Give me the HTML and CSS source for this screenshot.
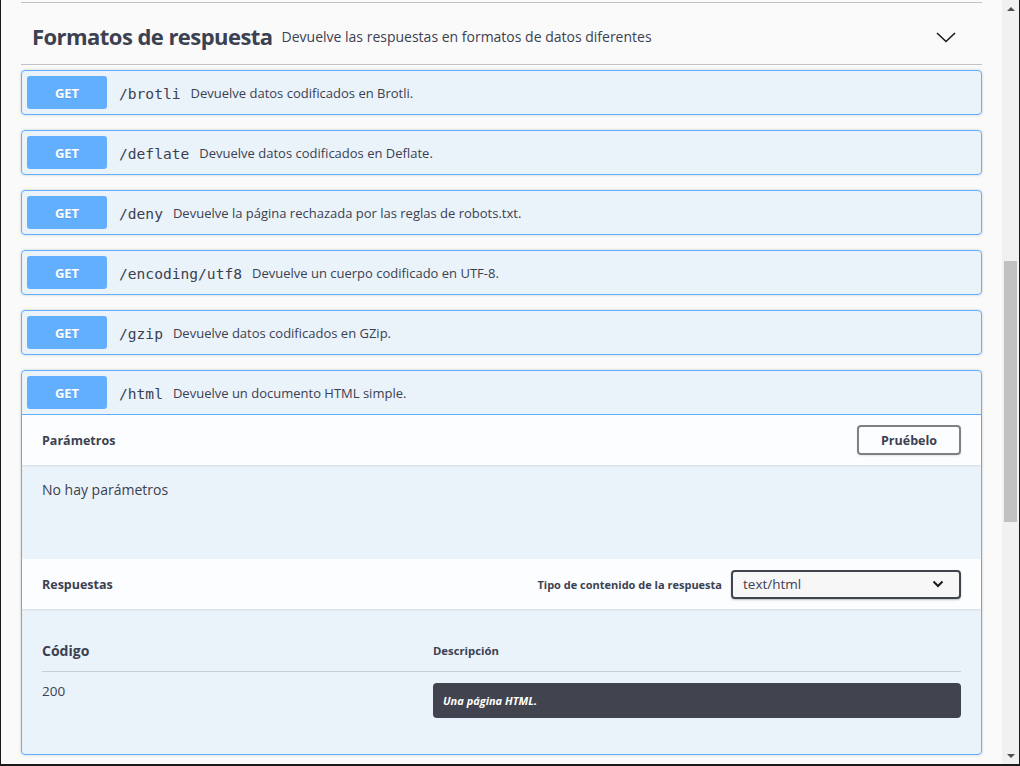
FILE: index.html
```html
<!DOCTYPE html>
<html lang="es">
<head>
<meta charset="utf-8">
<title>Formatos de respuesta</title>
<link rel="stylesheet" href="styles.css">
</head>
<body>
<div class="window">
  <div class="content">
    <div class="wrapper">
      <div class="prev-line"></div>
      <div class="tag-header">
        <h3 class="tag-title">Formatos de respuesta</h3>
        <span class="tag-desc">Devuelve las respuestas en formatos de datos diferentes</span>
        <svg class="tag-arrow" width="20" height="20" viewBox="0 0 20 20"><polyline points="1,6 10,14.5 19,6" fill="none" stroke="#1a1a1a" stroke-width="1.6"/></svg>
      </div>

      <div class="opblock">
        <div class="summary"><span class="method">GET</span><span class="path">/brotli</span><span class="desc">Devuelve datos codificados en Brotli.</span></div>
      </div>
      <div class="opblock">
        <div class="summary"><span class="method">GET</span><span class="path">/deflate</span><span class="desc">Devuelve datos codificados en Deflate.</span></div>
      </div>
      <div class="opblock">
        <div class="summary"><span class="method">GET</span><span class="path">/deny</span><span class="desc">Devuelve la página rechazada por las reglas de robots.txt.</span></div>
      </div>
      <div class="opblock">
        <div class="summary"><span class="method">GET</span><span class="path">/encoding/utf8</span><span class="desc">Devuelve un cuerpo codificado en UTF-8.</span></div>
      </div>
      <div class="opblock">
        <div class="summary"><span class="method">GET</span><span class="path">/gzip</span><span class="desc">Devuelve datos codificados en GZip.</span></div>
      </div>
      <div class="opblock open">
        <div class="summary"><span class="method">GET</span><span class="path">/html</span><span class="desc">Devuelve un documento HTML simple.</span></div>
        <div class="section-header">
          <h4 class="section-title">Parámetros</h4>
          <button class="try-btn">Pruébelo</button>
        </div>
        <div class="params-body">No hay parámetros</div>
        <div class="section-header">
          <h4 class="section-title">Respuestas</h4>
          <div class="ctype">
            <span class="ctype-label">Tipo de contenido de la respuesta</span>
            <div class="select"><span>text/html</span><svg width="12" height="8" viewBox="0 0 12 8"><polyline points="1.5,1.5 6,6 10.5,1.5" fill="none" stroke="#1a1a1a" stroke-width="2"/></svg></div>
          </div>
        </div>
        <div class="responses-body">
          <div class="resp-head">
            <span class="col-code head-code">Código</span>
            <span class="col-desc head-desc">Descripción</span>
          </div>
          <div class="resp-row">
            <span class="col-code row-code">200</span>
            <div class="col-desc"><div class="md-box">Una página HTML.</div></div>
          </div>
        </div>
      </div>
    </div>
  </div>
  <div class="scrollbar">
    <div class="sb-arrow up"></div>
    <div class="sb-track"><div class="sb-thumb"></div></div>
    <div class="sb-arrow down"></div>
  </div>
</div>
</body>
</html>
```

FILE: styles.css
```css
* { box-sizing: border-box; }
html, body { margin: 0; padding: 0; }
body {
  width: 1020px;
  height: 766px;
  overflow: hidden;
  background: #fafafa;
  font-family: "Open Sans", "Noto Sans", sans-serif;
  color: #3b4151;
}
.window {
  width: 1020px;
  height: 766px;
  display: flex;
  border-left: 1px solid #1a1a1a;
  border-right: 1px solid #1a1a1a;
  border-bottom: 2px solid #1a1a1a;
  background: #fafafa;
  overflow: hidden;
}
.content {
  flex: 1;
  overflow: hidden;
}
.wrapper {
  padding: 0 20px;
}
.prev-line {
  margin-top: 2px;
  border-bottom: 1px solid rgba(59,65,81,.3);
}
.tag-header {
  display: flex;
  align-items: center;
  height: 62px;
  padding: 4px 26px 0 11px;
  border-bottom: 1px solid rgba(59,65,81,.3);
  margin-bottom: 5px;
}
.tag-title {
  margin: 0;
  font-size: 22px;
  font-weight: 700;
  letter-spacing: -0.55px;
  color: #3b4151;
}
.tag-desc {
  flex: 1;
  margin-left: 9px;
  font-size: 14px;
  color: #3b4151;
  padding-top: 2px;
}
.tag-arrow { display: block; margin-top: 2px; }

.opblock {
  border: 1px solid #61affe;
  border-radius: 4px;
  background: rgba(97,175,254,.1);
  box-shadow: 0 0 3px rgba(0,0,0,.19);
  margin-bottom: 15px;
}
.summary {
  display: flex;
  align-items: center;
  padding: 5px;
  height: 43px;
}
.open .summary {
  height: 44px;
  border-bottom: 1px solid #61affe;
}
.method {
  width: 80px;
  height: 33px;
  display: flex;
  align-items: center;
  justify-content: center;
  background: #61affe;
  color: #fff;
  border-radius: 3px;
  font-size: 13px;
  font-weight: 700;
  text-shadow: 0 1px 0 rgba(0,0,0,.1);
}
.path {
  font-family: "DejaVu Sans Mono", monospace;
  font-size: 14.6px;
  color: #3b4151;
  padding: 0 10px 0 12px;
  margin-top: 2px;
}
.desc {
  font-size: 13px;
  color: #3b4151;
}

.section-header {
  display: flex;
  align-items: center;
  justify-content: space-between;
  min-height: 50px;
  padding: 0 20px;
  background: rgba(255,255,255,.8);
  box-shadow: 0 1px 2px rgba(0,0,0,.1);
  position: relative;
}
.section-title {
  margin: 0;
  font-size: 12.5px;
  font-weight: 700;
}
.try-btn {
  width: 104px;
  height: 30px;
  border: 2px solid #808080;
  border-radius: 4px;
  background: transparent;
  font-family: "Open Sans", sans-serif;
  font-size: 12.5px;
  font-weight: 700;
  color: #3b4151;
  box-shadow: 0 1px 2px rgba(0,0,0,.1);
}
.params-body {
  height: 93px;
  padding: 14px 20px 0;
  font-size: 14px;
  margin-top: 1px;
}
.ctype {
  display: flex;
  align-items: center;
}
.ctype-label {
  font-size: 11px;
  font-weight: 700;
  margin-right: 9px;
}
.select {
  width: 230px;
  height: 29px;
  border: 2px solid #41444e;
  border-radius: 4px;
  background: #f7f7f7;
  box-shadow: 0 1px 2px rgba(0,0,0,.25);
  display: flex;
  align-items: center;
  justify-content: space-between;
  padding: 0 15px 0 10px;
  font-size: 13.5px;
}
.select svg { display: block; }

.responses-body {
  height: 144px;
  padding: 30px 20px 0;
  margin-top: 1px;
}
.resp-head {
  display: flex;
  align-items: flex-start;
  height: 32px;
  padding-top: 1px;
  line-height: 20px;
  border-bottom: 1px solid rgba(59,65,81,.2);
}
.col-code { width: 391px; flex: none; }
.col-desc { flex: 1; }
.head-code { font-size: 14px; font-weight: 700; }
.head-desc { font-size: 11.3px; font-weight: 700; }
.resp-row {
  display: flex;
  padding-top: 11px;
}
.row-code { font-size: 13.5px; margin-top: -1px; }
.md-box {
  background: #41444e;
  border-radius: 4px;
  color: #fff;
  height: 35px;
  display: flex;
  align-items: center;
  padding: 0 10px;
  font-size: 11px;
  font-style: italic;
  font-weight: 700;
}

.scrollbar {
  width: 17px;
  flex: none;
  background: #f1f1f1;
  display: flex;
  flex-direction: column;
}
.sb-arrow {
  height: 17px;
  flex: none;
  display: flex;
  align-items: center;
  justify-content: center;
}
.sb-arrow::before {
  content: "";
  width: 0;
  height: 0;
  border-left: 4px solid transparent;
  border-right: 4px solid transparent;
}
.sb-arrow.up::before { border-bottom: 4px solid #505050; }
.sb-arrow.down::before { border-top: 4px solid #505050; }
.sb-track {
  flex: 1;
  padding: 244px 2px 0 2px;
}
.sb-thumb {
  height: 261px;
  background: #c1c1c1;
}
```
